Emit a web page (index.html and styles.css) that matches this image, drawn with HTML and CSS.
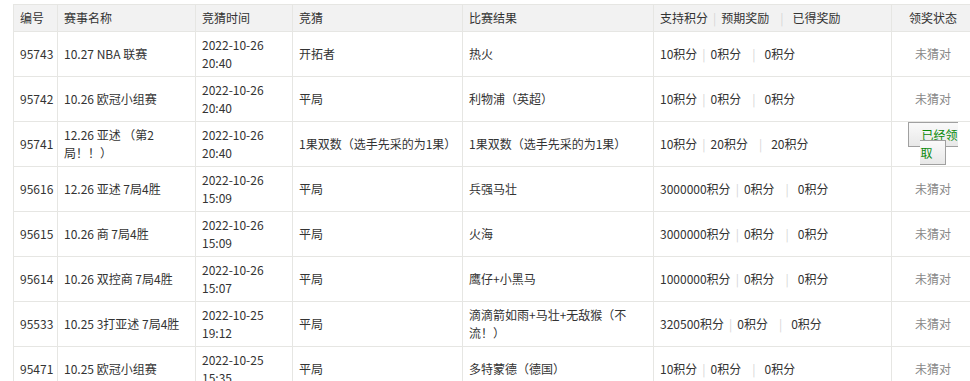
FILE: index.html
```html
<!DOCTYPE html>
<html lang="zh-CN">
<head>
<meta charset="utf-8">
<title>竞猜记录</title>
<link rel="stylesheet" href="styles.css">
</head>
<body>
<div class="wrap">
<table class="grid">
  <colgroup>
    <col class="c-id"><col class="c-name"><col class="c-time"><col class="c-guess"><col class="c-result"><col class="c-score"><col class="c-state">
  </colgroup>
  <thead>
    <tr>
      <th>编号</th>
      <th>赛事名称</th>
      <th>竞猜时间</th>
      <th>竞猜</th>
      <th>比赛结果</th>
      <th>支持积分<span class="sep s1">|</span>预期奖励<span class="sep s2">|</span>已得奖励</th>
      <th class="center">领奖状态</th>
    </tr>
  </thead>
  <tbody>
    <tr>
      <td>95743</td><td>10.27 NBA 联赛</td><td>2022-10-26 20:40</td><td>开拓者</td><td>热火</td>
      <td>10积分<span class="sep s1">|</span>0积分<span class="sep s2">|</span>0积分</td>
      <td class="center state">未猜对</td>
    </tr>
    <tr>
      <td>95742</td><td>10.26 欧冠小组赛</td><td>2022-10-26 20:40</td><td>平局</td><td>利物浦（英超）</td>
      <td>10积分<span class="sep s1">|</span>0积分<span class="sep s2">|</span>0积分</td>
      <td class="center state">未猜对</td>
    </tr>
    <tr>
      <td>95741</td><td>12.26 亚述 （第2局！！）</td><td>2022-10-26 20:40</td><td>1果双数（选手先采的为1果）</td><td>1果双数（选手先采的为1果）</td>
      <td>10积分<span class="sep s1">|</span>20积分<span class="sep s2">|</span>20积分</td>
      <td class="center"><a class="claimed">已经领取</a></td>
    </tr>
    <tr>
      <td>95616</td><td>12.26 亚述 7局4胜</td><td>2022-10-26 15:09</td><td>平局</td><td>兵强马壮</td>
      <td>3000000积分<span class="sep s1">|</span>0积分<span class="sep s2">|</span>0积分</td>
      <td class="center state">未猜对</td>
    </tr>
    <tr>
      <td>95615</td><td>10.26 商 7局4胜</td><td>2022-10-26 15:09</td><td>平局</td><td>火海</td>
      <td>3000000积分<span class="sep s1">|</span>0积分<span class="sep s2">|</span>0积分</td>
      <td class="center state">未猜对</td>
    </tr>
    <tr>
      <td>95614</td><td>10.26 双控商 7局4胜</td><td>2022-10-26 15:07</td><td>平局</td><td>鹰仔+小黑马</td>
      <td>1000000积分<span class="sep s1">|</span>0积分<span class="sep s2">|</span>0积分</td>
      <td class="center state">未猜对</td>
    </tr>
    <tr>
      <td>95533</td><td>10.25 3打亚述 7局4胜</td><td>2022-10-25 19:12</td><td>平局</td><td>滴滴箭如雨+马壮+无敌猴（不流！）</td>
      <td>320500积分<span class="sep s1">|</span>0积分<span class="sep s2">|</span>0积分</td>
      <td class="center state">未猜对</td>
    </tr>
    <tr>
      <td>95471</td><td>10.25 欧冠小组赛</td><td>2022-10-25 15:35</td><td>平局</td><td>多特蒙德（德国）</td>
      <td>10积分<span class="sep s1">|</span>0积分<span class="sep s2">|</span>0积分</td>
      <td class="center state">未猜对</td>
    </tr>
  </tbody>
</table>
</div>
</body>
</html>
```

FILE: styles.css
```css
html, body {
  margin: 0;
  padding: 0;
  background: #fff;
  overflow: hidden;
}
body {
  font-family: "Noto Sans CJK SC", "Noto Sans", sans-serif;
  font-size: 12px;
  color: #333;
}
.wrap {
  padding: 4px 0 0 13px;
  width: 1000px;
}
.grid {
  border-collapse: collapse;
  table-layout: fixed;
  width: 961px;
}
.c-id { width: 44px; }
.c-name { width: 138px; }
.c-time { width: 97px; }
.c-guess { width: 170px; }
.c-result { width: 191px; }
.c-score { width: 238px; }
.c-state { width: 82px; }
.grid th, .grid td {
  border: 1px solid #e6e6e3;
  padding: 0 5px 0 6px;
  text-align: left;
  vertical-align: middle;
  line-height: 18px;
  font-weight: normal;
  color: #333;
}
.grid th {
  background: #f2f2f2;
  height: 26px;
}
.grid td {
  height: 44px;
}
.grid .center {
  text-align: center;
}
.grid td.state {
  color: #888;
}
.sep {
  color: #d6d6d6;
}
.sep.s1 {
  margin: 0 5px;
}
.sep.s2 {
  margin: 0 9px 0 11px;
}
.claimed {
  color: #0a8a0a;
  background: linear-gradient(#fafafa, #e8e8e8);
  border: 1px solid #a0a0a0;
  padding: 3px 12px;
  cursor: pointer;
}
```
